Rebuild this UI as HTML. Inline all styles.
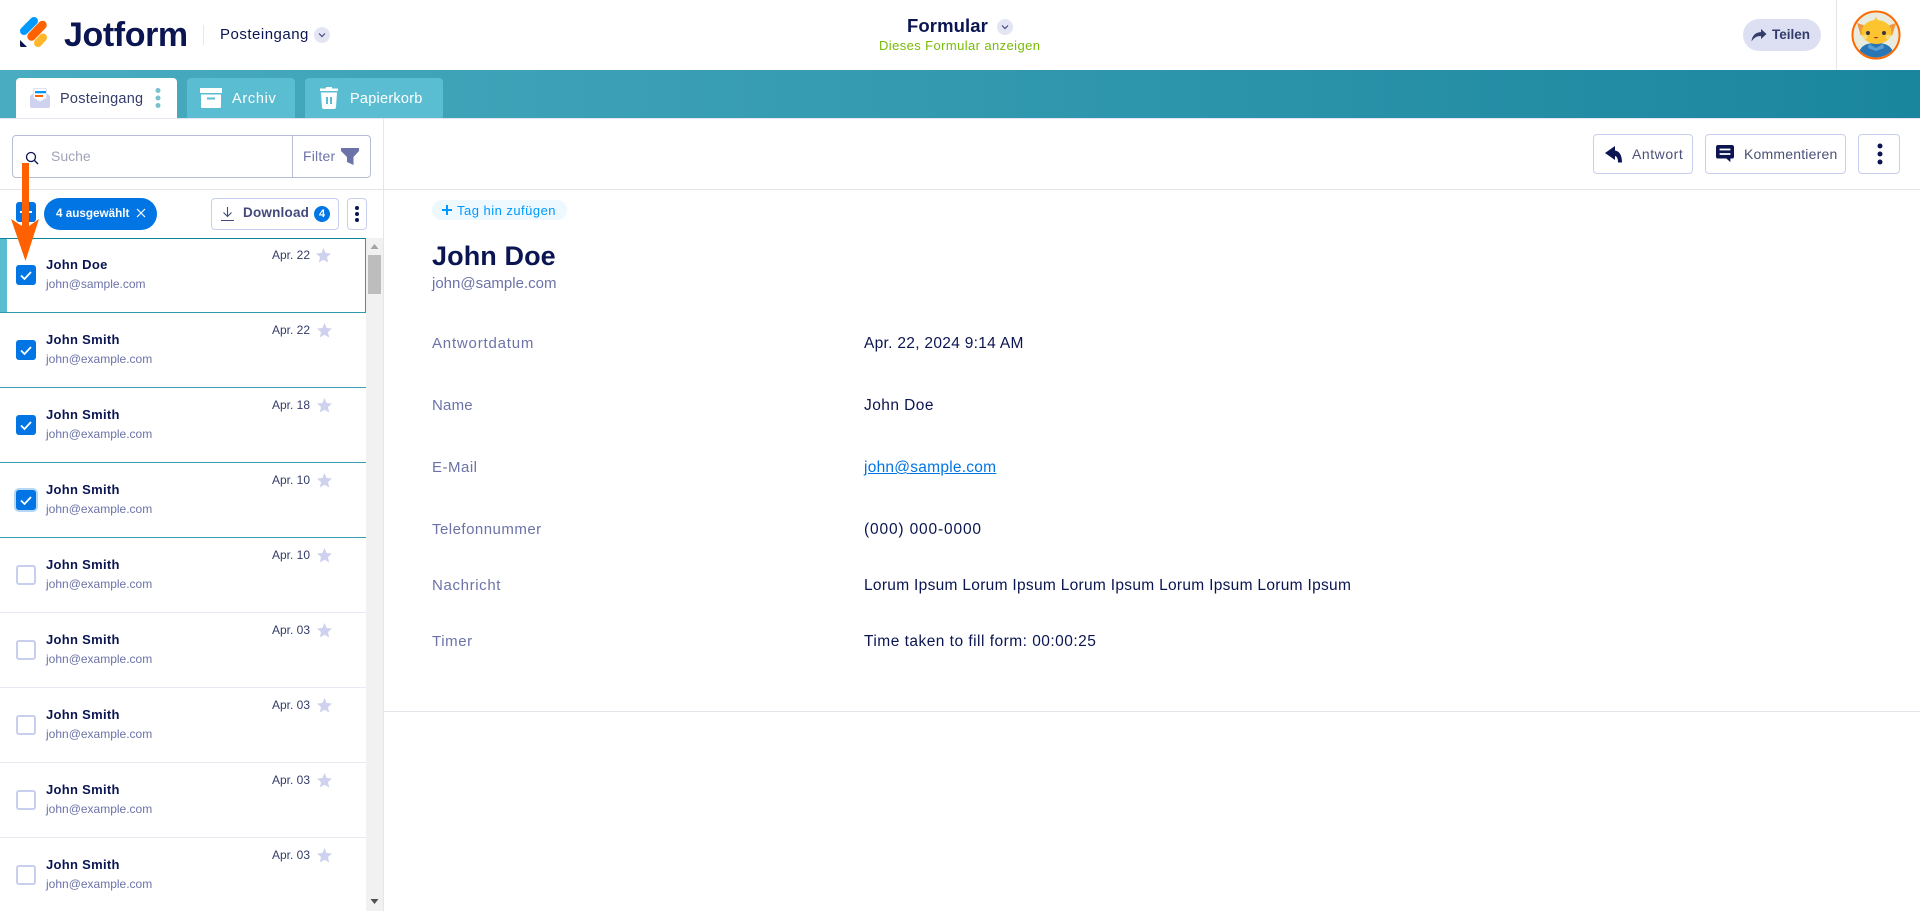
<!DOCTYPE html>
<html><head><meta charset="utf-8"><style>
*{box-sizing:border-box}
html,body{margin:0;padding:0;width:1920px;height:911px;overflow:hidden;background:#fff;font-family:"Liberation Sans",sans-serif;color:#0a1551}
.a{position:absolute;white-space:nowrap}
.row{position:absolute;left:0;width:366px;height:75px;border-bottom:1px solid #e8e9f2}
.row.s{border-bottom:1px solid #3a9fb2}
.cb{position:absolute;left:16px;top:27px;width:20px;height:20px;border-radius:3px;background:#0075e3}
.cb.e{background:#fff;border:2px solid #c8ceed}
.nm{position:absolute;left:46px;top:19px;font-size:13px;font-weight:bold;color:#0a1551;letter-spacing:.3px}
.em{position:absolute;left:46px;top:39px;font-size:12px;color:#6c73a8}
.dt{position:absolute;right:56px;top:10px;font-size:12px;color:#343c6a}
.st{position:absolute;left:317px;top:10px}
.lb{position:absolute;left:432px;font-size:15px;color:#6c73a8}
.vl{position:absolute;left:864px;font-size:15.5px;color:#0a1551;letter-spacing:.3px}
.btn{position:absolute;border:1px solid #c8ceed;border-radius:4px;background:#fff}
</style></head><body>

<!-- header -->
<svg class="a" style="left:0;top:0" width="60" height="60" viewBox="0 0 60 60">
<path d="M24 31 L34 21" stroke="#0099ff" stroke-width="8" stroke-linecap="round"/>
<path d="M31.500 36.500 L42.500 25" stroke="#ff6100" stroke-width="8.500" stroke-linecap="round"/>
<path d="M38 43 L43 37.500" stroke="#ffb629" stroke-width="8" stroke-linecap="round"/>
<path d="M20 40 L27 47 H21.500 Q20 47 20 45.500Z" fill="#0a1551"/>
</svg>
<div class="a" style="left:64px;top:14px;font-size:34px;font-weight:bold;color:#0a1551;letter-spacing:-.4px;line-height:42px">Jotform</div>
<div class="a" style="left:203px;top:25px;width:1px;height:20px;background:#e3e5f0"></div>
<div class="a" style="left:220px;top:26px;font-size:15px;color:#0a1551;letter-spacing:.5px">Posteingang</div>
<svg class="a" style="left:314px;top:27px" width="16" height="16"><circle cx="8" cy="8" r="8" fill="#e3e5f5"/><path d="M5 6.500 L8 9.500 L11 6.500" fill="none" stroke="#434a7a" stroke-width="1.200"/></svg>

<div class="a" style="left:907px;top:15px;font-size:18.500px;font-weight:bold;color:#0a1551;letter-spacing:.1px">Formular</div>
<svg class="a" style="left:997px;top:19px" width="16" height="16"><circle cx="8" cy="8" r="8" fill="#e3e5f5"/><path d="M5 6.500 L8 9.500 L11 6.500" fill="none" stroke="#434a7a" stroke-width="1.200"/></svg>
<div class="a" style="left:879px;top:38px;font-size:13px;color:#78bb07;letter-spacing:.4px">Dieses Formular anzeigen</div>

<div class="a" style="left:1743px;top:19px;width:78px;height:32px;border-radius:16px;background:#dde0f3"></div>
<svg class="a" style="left:1751px;top:28px" width="16" height="15" viewBox="0 0 16 15"><path d="M10 1 L15.500 6 L10 11 V8 C6 8 3 9.500 .5 13.500 C1 8 4 4.500 10 4Z" fill="#343c6a"/></svg>
<div class="a" style="left:1772px;top:27px;font-size:13.500px;font-weight:bold;color:#343c6a">Teilen</div>
<div class="a" style="left:1836px;top:0;width:1px;height:70px;background:#e3e5ea"></div>
<svg class="a" style="left:1851px;top:10px" width="50" height="50" viewBox="0 0 50 50">
<defs><clipPath id="c"><circle cx="25" cy="25" r="22.500"/></clipPath></defs>
<circle cx="25" cy="25" r="23.500" fill="#e9ebdf" stroke="#ff6a00" stroke-width="2"/>
<g clip-path="url(#c)">
<path d="M7 50 C7 37 13 33 25 33 C37 33 43 37 43 50Z" fill="#2a76b5"/>
<path d="M18 34 L25 38 L32 34 L33 38 L25 41 L17 38Z" fill="#5a9fd4"/>
<path d="M6 13 L15 16 L10 26Z M45 13 L36 16 L41 26Z" fill="#f0963c"/>
<ellipse cx="25.500" cy="22" rx="15" ry="12" fill="#fcc530"/>
<path d="M25 7 L28 12 H22Z" fill="#fcc530"/>
<circle cx="17" cy="23" r="2" fill="#3a3340"/><circle cx="33" cy="23" r="2" fill="#3a3340"/>
<circle cx="14" cy="27" r="2.300" fill="#f7dc7c"/><circle cx="37" cy="27" r="2.300" fill="#f7dc7c"/>
<path d="M22.500 27 Q25 30 27.500 27Z" fill="#b2352d"/>
</g></svg>

<!-- teal bar -->
<div class="a" style="left:0;top:70px;width:1920px;height:48px;background:linear-gradient(90deg,#4aacc0,#1a869e)"></div>
<div class="a" style="left:0;top:118px;width:1920px;height:1px;background:#e3e5f0"></div>
<div class="a" style="left:16px;top:78px;width:161px;height:40px;background:#fff;border-radius:4px 4px 0 0"></div>
<svg class="a" style="left:30px;top:88px" width="20" height="20" viewBox="0 0 20 20">
<path d="M0 8 L3 5.500 V2 Q3 0 5 0 H15 Q17 0 17 2 V5.500 L20 8 V18 Q20 20 18 20 H2 Q0 20 0 18Z" fill="#cfd2ee"/>
<path d="M3.500 2 Q3.500 .5 5 .5 H15 Q16.500 .5 16.500 2 V10 L10 13.500 L3.500 10Z" fill="#fff" stroke="#dfe2f5" stroke-width="1"/>
<rect x="5" y="3" width="11" height="2.300" fill="#0099ff"/><rect x="5" y="7" width="8" height="2" fill="#ff6100"/>
</svg>
<div class="a" style="left:60px;top:91px;font-size:14.500px;color:#343c6a;letter-spacing:.25px">Posteingang</div>
<svg class="a" style="left:155px;top:87px" width="6" height="22"><circle cx="3" cy="3.500" r="2.500" fill="#7cc0cf"/><circle cx="3" cy="11" r="2.500" fill="#7cc0cf"/><circle cx="3" cy="18.500" r="2.500" fill="#7cc0cf"/></svg>

<div class="a" style="left:187px;top:78px;width:108px;height:40px;background:#5bbdd1;border-radius:4px 4px 0 0"></div>
<svg class="a" style="left:200px;top:88px" width="22" height="20" viewBox="0 0 22 20"><path d="M0 0 H22 V5 H0Z M1 6.500 H21 V18.500 Q21 20 19.500 20 H2.500 Q1 20 1 18.500Z" fill="#fff"/><rect x="7" y="9.500" width="8" height="2" fill="#5bbdd1"/></svg>
<div class="a" style="left:232px;top:91px;font-size:14.500px;color:#fff;letter-spacing:.7px">Archiv</div>

<div class="a" style="left:305px;top:78px;width:138px;height:40px;background:#5bbdd1;border-radius:4px 4px 0 0"></div>
<svg class="a" style="left:320px;top:87px" width="18" height="22" viewBox="0 0 18 22"><path d="M6 0 H12 V1.500 H18 V4 H0 V1.500 H6Z M1 5.500 H17 L16 20 Q15.900 22 14 22 H4 Q2.100 22 2 20Z" fill="#fff"/><rect x="6" y="10" width="2" height="7" fill="#5bbdd1"/><rect x="10" y="10" width="2" height="7" fill="#5bbdd1"/></svg>
<div class="a" style="left:350px;top:91px;font-size:14.500px;color:#fff;letter-spacing:.25px">Papierkorb</div>

<!-- left panel -->
<div class="a" style="left:383px;top:119px;width:1px;height:792px;background:#e3e5f0"></div>
<div class="a" style="left:12px;top:135px;width:359px;height:43px;border:1px solid #b8bcd8;border-radius:4px;background:#fff"></div>
<div class="a" style="left:292px;top:135px;width:1px;height:43px;background:#b8bcd8"></div>
<svg class="a" style="left:25px;top:151px" width="14" height="14"><circle cx="6" cy="6" r="4.500" fill="none" stroke="#0a1551" stroke-width="1.300"/><path d="M9.500 9.500 L13 13" stroke="#0a1551" stroke-width="1.300"/></svg>
<div class="a" style="left:51px;top:148px;font-size:14px;color:#a0a3b8">Suche</div>
<div class="a" style="left:303px;top:148px;font-size:14px;color:#6c73a8;letter-spacing:.2px">Filter</div>
<svg class="a" style="left:341px;top:148px" width="18" height="18"><path d="M0 0 H18 V3 L12.500 9 V17 L6 14 V9 L0 3Z" fill="#6c73a8"/></svg>
<div class="a" style="left:0;top:189px;width:1920px;height:1px;background:#e3e5ea"></div>

<div class="a" style="left:16px;top:202px;width:20px;height:20px;border-radius:3px;background:#0075e3"></div>
<div class="a" style="left:20px;top:211px;width:12px;height:2px;background:#fff"></div>
<div class="a" style="left:44px;top:198px;width:113px;height:32px;border-radius:16px;background:#0075e3"></div>
<div class="a" style="left:56px;top:207px;font-size:11.700px;font-weight:bold;color:#fff">4 ausgewählt</div>
<svg class="a" style="left:136px;top:208px" width="10" height="10"><path d="M1 1 L9 9 M9 1 L1 9" stroke="#fff" stroke-width="1.200"/></svg>
<div class="btn" style="left:211px;top:198px;width:128px;height:32px"></div>
<svg class="a" style="left:221px;top:207px" width="13" height="15"><path d="M6.500 0 V9 M2.500 5.500 L6.500 9.500 L10.500 5.500 M0 13.500 H13" fill="none" stroke="#434a7a" stroke-width="1.100"/></svg>
<div class="a" style="left:243px;top:205px;font-size:13.500px;font-weight:bold;color:#434a7a;letter-spacing:.2px">Download</div>
<div class="a" style="left:314px;top:206px;width:16px;height:16px;border-radius:50%;background:#0075e3;color:#fff;font-size:11px;font-weight:bold;text-align:center;line-height:16px">4</div>
<div class="btn" style="left:347px;top:198px;width:20px;height:32px"></div>
<svg class="a" style="left:354px;top:205px" width="6" height="18"><circle cx="3" cy="3" r="2" fill="#0a1551"/><circle cx="3" cy="9" r="2" fill="#0a1551"/><circle cx="3" cy="15" r="2" fill="#0a1551"/></svg>

<!-- rows -->
<div class="a" style="left:366px;top:238px;width:17px;height:673px;background:#f1f1f1"></div>
<svg class="a" style="left:369px;top:243px" width="11" height="7"><path d="M1.500 6 L5.500 1 L9.500 6Z" fill="#a3a3a3"/></svg>
<div class="a" style="left:368px;top:255px;width:13px;height:39px;background:#bdbdbd"></div>
<svg class="a" style="left:369px;top:898px" width="11" height="7"><path d="M1.500 1 L5.500 6 L9.500 1Z" fill="#505050"/></svg>

<div class="row" style="top:238px;height:75px;border:1px solid #2f99ac;border-left:0;border-top-color:#0d8397"><div class="a" style="left:0;top:0;width:7px;height:73px;background:#5bbdd1"></div><div class="cb" style="top:26px"><svg width="20" height="20"><path d="M5 10.500 L8.500 14 L15 7" fill="none" stroke="#fff" stroke-width="1.800"/></svg></div><div class="nm" style="top:18px">John Doe</div><div class="em" style="top:38px">john@sample.com</div><div class="dt" style="top:9px;right:55px">Apr. 22</div><svg class="st" style="left:316px;top:9px" width="15" height="15" viewBox="0 0 16 16"><path d="M8 0 L10.300 5.300 L16 5.900 L11.700 9.700 L13 15.500 L8 12.500 L3 15.500 L4.300 9.700 L0 5.900 L5.700 5.300Z" fill="#ced2ee"/></svg></div>

<div class="row s" style="top:313px"><div class="cb"><svg width="20" height="20"><path d="M5 10.500 L8.500 14 L15 7" fill="none" stroke="#fff" stroke-width="1.800"/></svg></div><div class="nm">John Smith</div><div class="em">john@example.com</div><div class="dt">Apr. 22</div><svg class="st" width="15" height="15" viewBox="0 0 16 16"><path d="M8 0 L10.300 5.300 L16 5.900 L11.700 9.700 L13 15.500 L8 12.500 L3 15.500 L4.300 9.700 L0 5.900 L5.700 5.300Z" fill="#ced2ee"/></svg></div>
<div class="row s" style="top:388px"><div class="cb"><svg width="20" height="20"><path d="M5 10.500 L8.500 14 L15 7" fill="none" stroke="#fff" stroke-width="1.800"/></svg></div><div class="nm">John Smith</div><div class="em">john@example.com</div><div class="dt">Apr. 18</div><svg class="st" width="15" height="15" viewBox="0 0 16 16"><path d="M8 0 L10.300 5.300 L16 5.900 L11.700 9.700 L13 15.500 L8 12.500 L3 15.500 L4.300 9.700 L0 5.900 L5.700 5.300Z" fill="#ced2ee"/></svg></div>
<div class="row s" style="top:463px"><div class="cb" style="box-shadow:0 0 0 2px #b7d8f5"><svg width="20" height="20"><path d="M5 10.500 L8.500 14 L15 7" fill="none" stroke="#fff" stroke-width="1.800"/></svg></div><div class="nm">John Smith</div><div class="em">john@example.com</div><div class="dt">Apr. 10</div><svg class="st" width="15" height="15" viewBox="0 0 16 16"><path d="M8 0 L10.300 5.300 L16 5.900 L11.700 9.700 L13 15.500 L8 12.500 L3 15.500 L4.300 9.700 L0 5.900 L5.700 5.300Z" fill="#ced2ee"/></svg></div>
<div class="row" style="top:538px"><div class="cb e"></div><div class="nm">John Smith</div><div class="em">john@example.com</div><div class="dt">Apr. 10</div><svg class="st" width="15" height="15" viewBox="0 0 16 16"><path d="M8 0 L10.300 5.300 L16 5.900 L11.700 9.700 L13 15.500 L8 12.500 L3 15.500 L4.300 9.700 L0 5.900 L5.700 5.300Z" fill="#ced2ee"/></svg></div>
<div class="row" style="top:613px"><div class="cb e"></div><div class="nm">John Smith</div><div class="em">john@example.com</div><div class="dt">Apr. 03</div><svg class="st" width="15" height="15" viewBox="0 0 16 16"><path d="M8 0 L10.300 5.300 L16 5.900 L11.700 9.700 L13 15.500 L8 12.500 L3 15.500 L4.300 9.700 L0 5.900 L5.700 5.300Z" fill="#ced2ee"/></svg></div>
<div class="row" style="top:688px"><div class="cb e"></div><div class="nm">John Smith</div><div class="em">john@example.com</div><div class="dt">Apr. 03</div><svg class="st" width="15" height="15" viewBox="0 0 16 16"><path d="M8 0 L10.300 5.300 L16 5.900 L11.700 9.700 L13 15.500 L8 12.500 L3 15.500 L4.300 9.700 L0 5.900 L5.700 5.300Z" fill="#ced2ee"/></svg></div>
<div class="row" style="top:763px"><div class="cb e"></div><div class="nm">John Smith</div><div class="em">john@example.com</div><div class="dt">Apr. 03</div><svg class="st" width="15" height="15" viewBox="0 0 16 16"><path d="M8 0 L10.300 5.300 L16 5.900 L11.700 9.700 L13 15.500 L8 12.500 L3 15.500 L4.300 9.700 L0 5.900 L5.700 5.300Z" fill="#ced2ee"/></svg></div>
<div class="row" style="top:838px;border:0"><div class="cb e"></div><div class="nm">John Smith</div><div class="em">john@example.com</div><div class="dt">Apr. 03</div><svg class="st" width="15" height="15" viewBox="0 0 16 16"><path d="M8 0 L10.300 5.300 L16 5.900 L11.700 9.700 L13 15.500 L8 12.500 L3 15.500 L4.300 9.700 L0 5.900 L5.700 5.300Z" fill="#ced2ee"/></svg></div>

<!-- orange arrow -->
<svg class="a" style="left:10px;top:162px" width="30" height="100" viewBox="0 0 30 100"><path d="M12 1 H19 V64 L29 57 L15.500 99 L1 57 L12 64Z" fill="#ff6100"/></svg>

<!-- right toolbar -->
<div class="btn" style="left:1593px;top:134px;width:100px;height:40px"></div>
<svg class="a" style="left:1604px;top:145px" width="18" height="18" viewBox="0 0 18 18"><path d="M1 8 L11 1 V5.500 C15 6 18 9.500 18 17.500 H14 C14 13.500 13 11.500 11 11 V15Z" fill="#0a1551"/></svg>
<div class="a" style="left:1632px;top:146px;font-size:14px;color:#4c5178;letter-spacing:.55px">Antwort</div>
<div class="btn" style="left:1705px;top:134px;width:141px;height:40px"></div>
<svg class="a" style="left:1716px;top:145px" width="18" height="18" viewBox="0 0 20 20"><path d="M2.500 0 H17.500 Q20 0 20 2.500 V13 Q20 15 17.500 15 H16 V19 L11.500 15 H2.500 Q0 15 0 13 V2.500 Q0 0 2.500 0Z" fill="#0a1551"/><rect x="4" y="4" width="12" height="2" fill="#fff"/><rect x="4" y="9" width="12" height="2" fill="#fff"/></svg>
<div class="a" style="left:1744px;top:146px;font-size:14px;color:#4c5178;letter-spacing:.2px">Kommentieren</div>
<div class="btn" style="left:1858px;top:134px;width:42px;height:40px"></div>
<svg class="a" style="left:1877px;top:143px" width="6" height="22"><circle cx="3" cy="3" r="2.500" fill="#0a1551"/><circle cx="3" cy="11" r="2.500" fill="#0a1551"/><circle cx="3" cy="19" r="2.500" fill="#0a1551"/></svg>

<!-- detail -->
<div class="a" style="left:432px;top:200px;width:135px;height:20px;border-radius:10px;background:#edf8ff"></div>
<svg class="a" style="left:442px;top:205px" width="10" height="10"><path d="M5 0 V10 M0 5 H10" stroke="#0099ff" stroke-width="2"/></svg>
<div class="a" style="left:457px;top:203px;font-size:13px;color:#0099ff;letter-spacing:.48px">Tag hin zufügen</div>
<div class="a" style="left:432px;top:241px;font-size:27px;font-weight:bold;color:#0a1551;letter-spacing:.1px">John Doe</div>
<div class="a" style="left:432px;top:275px;font-size:15px;color:#6c73a8">john@sample.com</div>

<div class="lb" style="top:335px;letter-spacing:.8px">Antwortdatum</div><div class="vl" style="top:335px">Apr. 22, 2024 9:14 AM</div>
<div class="lb" style="top:397px;letter-spacing:.2px">Name</div><div class="vl" style="top:397px;letter-spacing:.45px">John Doe</div>
<div class="lb" style="top:459px;letter-spacing:.5px">E-Mail</div><div class="vl" style="top:459px;color:#0075e3;text-decoration:underline;letter-spacing:.25px">john@sample.com</div>
<div class="lb" style="top:521px;letter-spacing:.48px">Telefonnummer</div><div class="vl" style="top:521px;letter-spacing:.85px">(000) 000-0000</div>
<div class="lb" style="top:577px;letter-spacing:.64px">Nachricht</div><div class="vl" style="top:577px">Lorum Ipsum Lorum Ipsum Lorum Ipsum Lorum Ipsum Lorum Ipsum</div>
<div class="lb" style="top:633px;letter-spacing:.6px">Timer</div><div class="vl" style="top:633px;letter-spacing:.48px">Time taken to fill form: 00:00:25</div>
<div class="a" style="left:384px;top:711px;width:1536px;height:1px;background:#e3e5ea"></div>
</body></html>
